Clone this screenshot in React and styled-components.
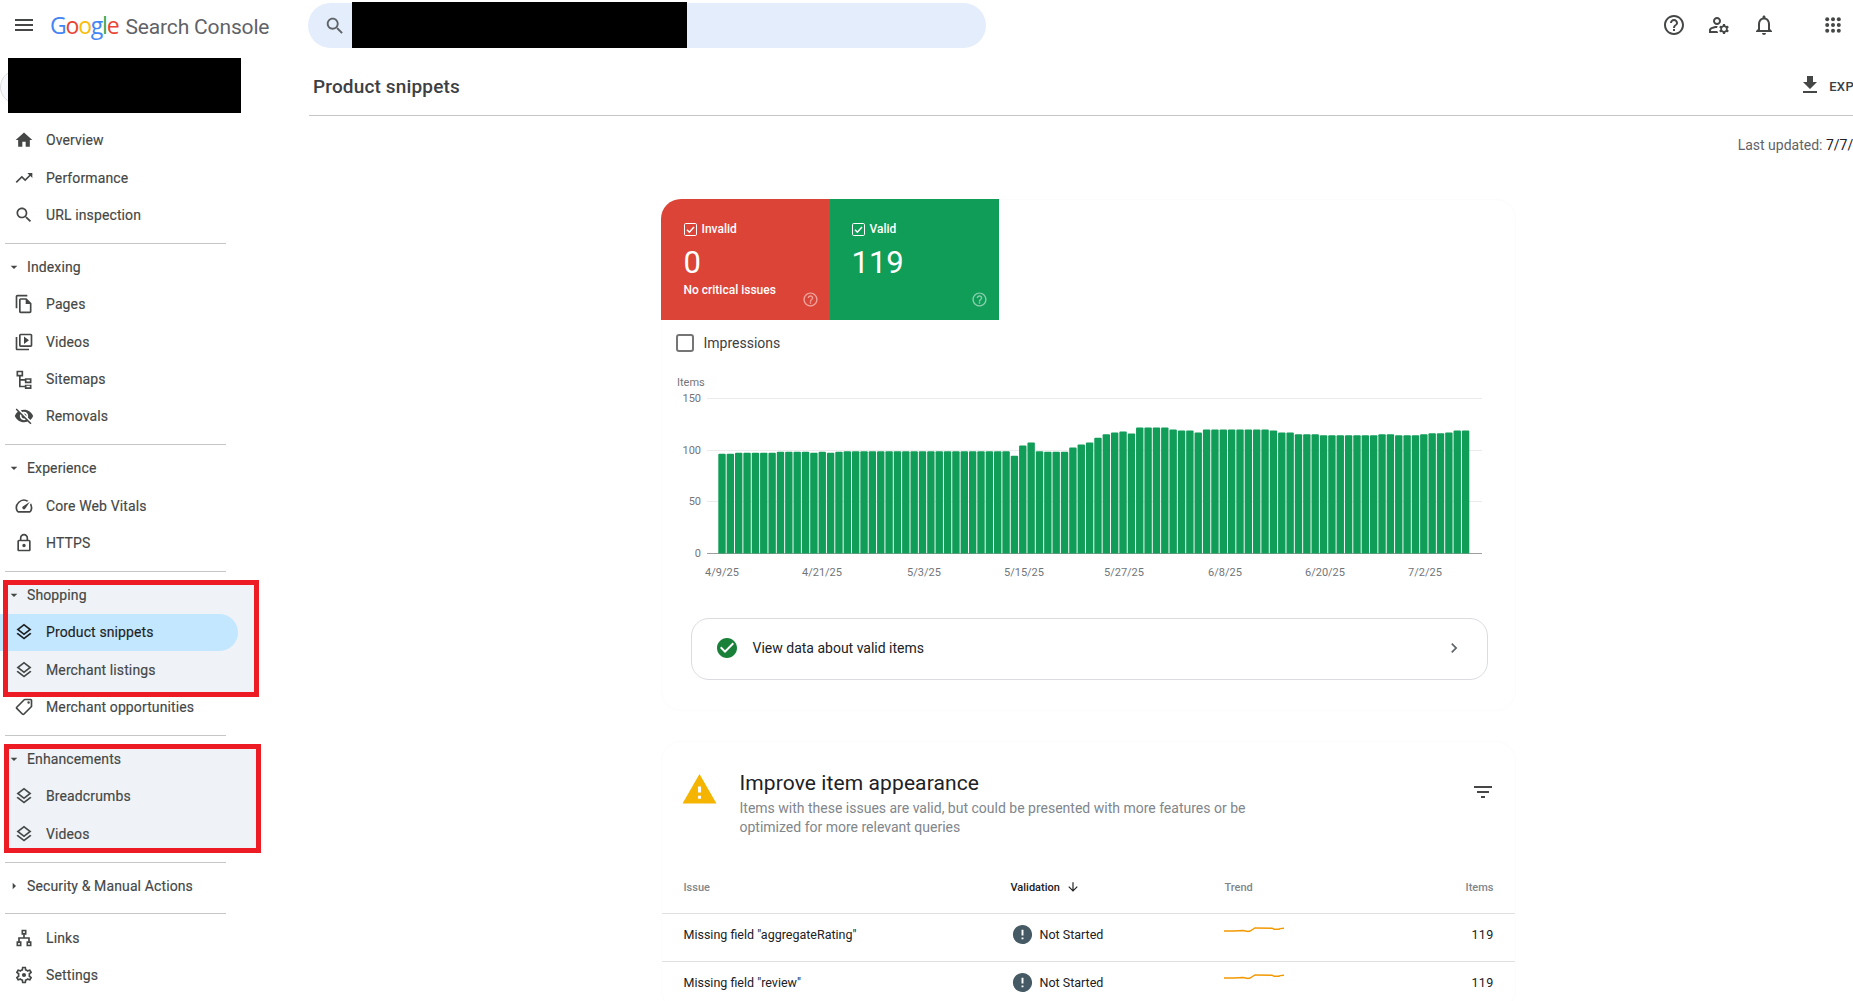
import React from "react";
import styled, { createGlobalStyle } from "styled-components";

const Global = createGlobalStyle`
  html, body { margin: 0; padding: 0; width: 1853px; height: 1001px; overflow: hidden; background: #fff; }
  body { font-family: Roboto, "Liberation Sans", sans-serif; color: #202124; }
  *, *::before, *::after { box-sizing: border-box; }
`;

const P = {
  menu: "M3 18h18v-2H3v2zm0-5h18v-2H3v2zm0-7v2h18V6H3z",
  home: "M10 20v-6h4v6h5v-8h3L12 3 2 12h3v8z",
  trend: "M16 6l2.29 2.29-4.88 4.88-4-4L2 16.59 3.41 18l6-6 4 4 6.3-6.29L22 12V6z",
  search: "M15.5 14h-.79l-.28-.27C15.41 12.59 16 11.11 16 9.5 16 5.91 13.09 3 9.5 3S3 5.91 3 9.5 5.91 16 9.5 16c1.61 0 3.09-.59 4.23-1.57l.27.28v.79l5 4.99L20.49 19l-4.99-5zm-6 0C7.01 14 5 11.99 5 9.5S7.01 5 9.5 5 14 7.01 14 9.5 11.99 14 9.5 14z",
  pages: "M16 1H4c-1.1 0-2 .9-2 2v14h2V3h12V1zm-1 4H8c-1.1 0-1.99.9-1.99 2L6 21c0 1.1.89 2 1.99 2H19c1.1 0 2-.9 2-2V11l-6-6zM8 21V7h6v5h5v9H8z",
  video: "M4 6H2v14c0 1.1.9 2 2 2h14v-2H4V6zm16-4H8c-1.1 0-2 .9-2 2v12c0 1.1.9 2 2 2h12c1.1 0 2-.9 2-2V4c0-1.1-.9-2-2-2zm0 14H8V4h12v12zM12 5.5v9l6-4.5z",
  sitemap: "M3 2h8v7H8v3h5v-1h8v6h-8v-3H8v6h5v-1h8v6h-8v-3H6V9H3V2zm2 2v3h4V4H5zm10 9v2h4v-2h-4zm0 7v2h4v-2h-4z",
  off: "M12 7c2.76 0 5 2.24 5 5 0 .65-.13 1.26-.36 1.83l2.92 2.92c1.51-1.26 2.7-2.89 3.43-4.75-1.73-4.39-6-7.5-11-7.5-1.4 0-2.74.25-3.98.7l2.16 2.16C10.74 7.13 11.35 7 12 7zM2 4.27l2.28 2.28.46.46C3.08 8.3 1.78 10.02 1 12c1.73 4.39 6 7.5 11 7.5 1.55 0 3.03-.3 4.38-.84l.42.42L19.73 22 21 20.73 3.27 3 2 4.27zM7.53 9.8l1.55 1.55c-.05.21-.08.43-.08.65 0 1.66 1.34 3 3 3 .22 0 .44-.03.65-.08l1.55 1.55c-.67.33-1.41.53-2.2.53-2.76 0-5-2.24-5-5 0-.79.2-1.53.53-2.2zm4.31-.78l3.15 3.15.02-.16c0-1.66-1.34-3-3-3l-.17.01z",
  speed: "M20.38 8.57l-1.23 1.85a8 8 0 0 1-.22 7.58H5.07A8 8 0 0 1 15.58 6.85l1.85-1.23A10 10 0 0 0 3.35 19a2 2 0 0 0 1.72 1h13.85a2 2 0 0 0 1.74-1 10 10 0 0 0-.27-10.44zm-9.79 6.84a2 2 0 0 0 2.83 0l5.66-8.49-8.49 5.66a2 2 0 0 0 0 2.83z",
  lock: "M18 8h-1V6c0-2.76-2.24-5-5-5S7 3.24 7 6v2H6c-1.1 0-2 .9-2 2v10c0 1.1.9 2 2 2h12c1.1 0 2-.9 2-2V10c0-1.1-.9-2-2-2zM9 6c0-1.66 1.34-3 3-3s3 1.34 3 3v2H9V6zm9 14H6V10h12v10zm-6-3c1.1 0 2-.9 2-2s-.9-2-2-2-2 .9-2 2 .9 2 2 2z",
  layers: "M11.99 18.54l-7.37-5.73L3 14.07l9 7 9-7-1.63-1.27-7.38 5.74zM12 16l7.36-5.73L21 9l-9-7-9 7 1.63 1.27L12 16zm0-11.47L17.74 9 12 13.47 6.26 9 12 4.53z",
  tag: "M21.41 11.58l-9-9C12.05 2.22 11.55 2 11 2H4c-1.1 0-2 .9-2 2v7c0 .55.22 1.05.59 1.42l9 9c.36.36.86.58 1.41.58s1.05-.22 1.41-.59l7-7c.37-.36.59-.86.59-1.41s-.23-1.06-.59-1.42zM13 20.01L4 11V4h7v-.01l9 9-7 7.02zM6.5 5a1.5 1.5 0 1 0 0 3 1.5 1.5 0 0 0 0-3z",
  links: "M9 2h6v6h-2v3h6v5h2v6h-6v-6h2v-3H7v3h2v6H3v-6h2v-5h6V8H9V2zm2 2v2h2V4h-2zM5 18v2h2v-2H5zm12 0v2h2v-2h-2z",
  gear: "M19.43 12.98c.04-.32.07-.64.07-.98 0-.34-.03-.66-.07-.98l2.11-1.65c.19-.15.24-.42.12-.64l-2-3.46c-.09-.16-.26-.25-.44-.25-.06 0-.12.01-.17.03l-2.49 1c-.52-.4-1.08-.73-1.69-.98l-.38-2.65C14.46 2.18 14.25 2 14 2h-4c-.25 0-.46.18-.49.42l-.38 2.65c-.61.25-1.17.59-1.69.98l-2.49-1c-.06-.02-.12-.03-.18-.03-.17 0-.34.09-.43.25l-2 3.46c-.13.22-.07.49.12.64l2.11 1.65c-.04.32-.07.65-.07.98 0 .33.03.66.07.98l-2.11 1.65c-.19.15-.24.42-.12.64l2 3.46c.09.16.26.25.44.25.06 0 .12-.01.17-.03l2.49-1c.52.4 1.08.73 1.69.98l.38 2.65c.03.24.24.42.49.42h4c.25 0 .46-.18.49-.42l.38-2.65c.61-.25 1.17-.59 1.69-.98l2.49 1c.06.02.12.03.18.03.17 0 .34-.09.43-.25l2-3.46c.12-.22.07-.49-.12-.64l-2.11-1.65zm-1.98-1.71c.04.31.05.52.05.73 0 .21-.02.43-.05.73l-.14 1.13.89.7 1.08.84-.7 1.21-1.27-.51-1.04-.42-.9.68c-.43.32-.84.56-1.25.73l-1.06.43-.16 1.13-.2 1.35h-1.4l-.19-1.35-.16-1.13-1.06-.43c-.43-.18-.83-.41-1.23-.71l-.91-.7-1.06.43-1.27.51-.7-1.21 1.08-.84.89-.7-.14-1.13c-.03-.31-.05-.54-.05-.74s.02-.43.05-.73l.14-1.13-.89-.7-1.08-.84.7-1.21 1.27.51 1.04.42.9-.68c.43-.32.84-.56 1.25-.73l1.06-.43.16-1.13.2-1.35h1.39l.19 1.35.16 1.13 1.06.43c.43.18.83.41 1.23.71l.91.7 1.06-.43 1.27-.51.7 1.21-1.07.85-.89.7.14 1.13zM12 9.5a2.5 2.5 0 1 0 0 5 2.5 2.5 0 0 0 0-5z",
  help: "M11 18h2v-2h-2v2zm1-16C6.48 2 2 6.48 2 12s4.48 10 10 10 10-4.48 10-10S17.52 2 12 2zm0 18c-4.41 0-8-3.59-8-8s3.59-8 8-8 8 3.59 8 8-3.59 8-8 8zm0-14c-2.21 0-4 1.79-4 4h2c0-1.1.9-2 2-2s2 .9 2 2c0 2-3 1.75-3 5h2c0-2.25 3-2.5 3-5 0-2.21-1.79-4-4-4z",
  manage: "M4 18v-.65c0-.34.16-.66.41-.81C6.1 15.53 8.03 15 10 15c.03 0 .05 0 .08.01.1-.7.3-1.37.59-1.98-.22-.02-.44-.03-.67-.03-2.42 0-4.68.67-6.61 1.82-.88.52-1.39 1.5-1.39 2.53V20h9.26c-.42-.6-.75-1.28-.97-2H4zM10 12c2.21 0 4-1.79 4-4s-1.79-4-4-4-4 1.79-4 4 1.79 4 4 4zm0-6c1.1 0 2 .9 2 2s-.9 2-2 2-2-.9-2-2 .9-2 2-2zM20.75 16c0-.22-.03-.42-.06-.63l1.14-1.01-1-1.73-1.45.49c-.32-.27-.68-.48-1.08-.63L18 11h-2l-.3 1.49c-.4.15-.76.36-1.08.63l-1.45-.49-1 1.73 1.14 1.01c-.03.21-.06.41-.06.63s.03.42.06.63l-1.14 1.01 1 1.73 1.45-.49c.32.27.68.48 1.08.63L16 21h2l.3-1.49c.4-.15.76-.36 1.08-.63l1.45.49 1-1.73-1.14-1.01c.03-.21.06-.41.06-.63zM17 18c-1.1 0-2-.9-2-2s.9-2 2-2 2 .9 2 2-.9 2-2 2z",
  bell: "M12 22c1.1 0 2-.9 2-2h-4c0 1.1.9 2 2 2zm6-6v-5c0-3.07-1.63-5.64-4.5-6.32V4c0-.83-.67-1.5-1.5-1.5s-1.5.67-1.5 1.5v.68C7.64 5.36 6 7.92 6 11v5l-2 2v1h16v-1l-2-2zm-2 1H8v-6c0-2.48 1.51-4.5 4-4.5s4 2.02 4 4.5v6z",
  download: "M19 9h-4V3H9v6H5l7 7 7-7zM5 18v2h14v-2H5z",
  warning: "M1 21h22L12 2 1 21zm12-3h-2v-2h2v2zm0-4h-2v-4h2v4z",
  filter: "M10 18h4v-2h-4v2zM3 6v2h18V6H3zm3 7h12v-2H6v2z",
  error: "M12 2C6.48 2 2 6.48 2 12s4.48 10 10 10 10-4.48 10-10S17.52 2 12 2zm1 15h-2v-2h2v2zm0-4h-2V7h2v6z",
  down: "M20 12l-1.41-1.41L13 16.17V4h-2v12.17l-5.58-5.59L4 12l8 8 8-8z",
  chevron: "M10 6L8.59 7.41 13.17 12l-4.58 4.59L10 18l6-6z",
  check: "M12 2C6.48 2 2 6.48 2 12s4.48 10 10 10 10-4.48 10-10S17.52 2 12 2zm-2 15l-5-5 1.41-1.41L10 14.17l7.59-7.59L19 8l-9 9z",
  caretDown: "M7 10l5 5 5-5z",
  caretRight: "M10 17l5-5-5-5v10z",
};

const Svg = styled.svg`
  display: block;
  flex: none;
  width: ${(p) => p.$size}px;
  height: ${(p) => p.$size}px;
  fill: ${(p) => p.$color || "#444746"};
  transform: ${(p) => (p.$rotate ? `rotate(${p.$rotate}deg)` : "none")};
`;
const Icon = ({ d, size = 20, color, rotate, ...rest }) => (
  <Svg viewBox="0 0 24 24" $size={size} $color={color} $rotate={rotate} {...rest}>
    <path d={d} />
  </Svg>
);

const Page = styled.div`
  width: 1853px;
  height: 1001px;
  overflow: hidden;
`;
const TopBar = styled.header`
  display: flex;
  align-items: center;
  height: 58px;
  padding: 0 8px 8px 12px;
`;
const LogoArea = styled.div`
  display: flex;
  align-items: center;
  width: 296px;
  flex: none;
`;
const Logo = styled.div`
  display: flex;
  align-items: baseline;
  margin-left: 14px;
  margin-top: 0;
  font-size: 22px;
  white-space: nowrap;
`;
const GoogleWord = styled.span`
  font-family: "Open Sans", Roboto, sans-serif;
  font-size: 23px;
  letter-spacing: -1.2px;
  margin-right: 7px;
`;
const Letter = styled.span`
  color: ${(p) => p.$c};
`;
const ProductName = styled.span`
  font-family: Roboto, sans-serif;
  color: #5f6368;
  font-size: 21px;
  letter-spacing: -0.15px;
`;
const SearchBar = styled.div`
  position: relative;
  width: 678px;
  height: 45px;
  margin-top: 1px;
  border-radius: 23px;
  background: #e4edfb;
  display: flex;
  align-items: center;
  padding-left: 16px;
`;
const TopRedaction = styled.div`
  position: absolute;
  left: 44px;
  top: -1px;
  width: 335px;
  height: 46px;
  background: #000;
`;
const TopActions = styled.div`
  display: flex;
  align-items: center;
  gap: 21px;
  margin-left: auto;
`;
const Apps = styled.svg`
  display: block;
  width: 16px;
  height: 16px;
  margin-left: 28px;
  margin-right: 4px;
  fill: #444746;
`;

const Body = styled.div`
  display: flex;
  align-items: flex-start;
`;
const Sidebar = styled.nav`
  flex: none;
  width: 309px;
`;
const PropertySlot = styled.div`
  position: relative;
  height: 55px;
  padding-left: 8px;
  margin-bottom: 8.5px;
  &::before {
    content: "";
    position: absolute;
    left: 0;
    top: 12px;
    width: 60px;
    height: 34px;
    border: 1px solid #dadce0;
    border-radius: 17px;
    background: #f6f8fc;
  }
`;
const PropertyRedaction = styled.div`
  position: relative;
  width: 233px;
  height: 55px;
  background: #000;
`;
const Divider = styled.div`
  width: 221px;
  height: 1px;
  margin: 9px 0 4.5px 5px;
  background: #c4c7c5;
`;
const Row = styled.div`
  position: relative;
  z-index: 1;
  display: flex;
  align-items: center;
  gap: 12px;
  width: 238px;
  height: 37.4px;
  padding-left: 14px;
  font-size: 14px;
  font-weight: 400;
  letter-spacing: 0.12px;
  -webkit-text-stroke: 0.15px currentColor;
  color: ${(p) => (p.$active ? "#1f1f1f" : "#444746")};
  background: ${(p) => (p.$active ? "#c2e7ff" : "transparent")};
  border-radius: 0 19px 19px 0;
`;
const SectionHead = styled(Row)`
  gap: 5px;
  padding-left: 6px;
`;
const Highlight = styled.div`
  position: relative;
  &::before,
  &::after {
    content: "";
    position: absolute;
    left: ${(p) => p.$left}px;
    top: ${(p) => p.$top}px;
    bottom: ${(p) => p.$bottom}px;
    width: ${(p) => p.$width}px;
  }
  &::before {
    background: #eff2f7;
  }
  &::after {
    z-index: 2;
    border: 5px solid #ed1c24;
    pointer-events: none;
  }
`;

const Main = styled.main`
  flex: none;
  width: 1558px;
`;
const TitleBar = styled.div`
  display: flex;
  align-items: center;
  justify-content: space-between;
  height: 58px;
  padding: 0 0 0 4px;
  border-bottom: 1px solid #c4c7c5;
`;
const Title = styled.h1`
  margin: 0;
  font-size: 19px;
  font-weight: 500;
  letter-spacing: 0.15px;
  color: #3c4043;
`;
const ExportButton = styled.div`
  display: flex;
  align-items: center;
  gap: 7px;
  margin: -4px -13px 0 0;
  font-size: 13px;
  font-weight: 500;
  color: #3c4043;
  letter-spacing: 0.4px;
`;
const ExportLabel = styled.span`
  margin-top: 4px;
`;
const LastUpdated = styled.div`
  padding-top: 19px;
  height: 39px;
  margin-right: -2px;
  line-height: 20px;
  text-align: right;
  font-size: 14px;
  color: #5f6368;
  white-space: nowrap;
  & b {
    font-weight: 400;
    color: #202124;
  }
`;
const Card = styled.section`
  width: 855px;
  margin: ${(p) => p.$top}px auto 0;
  border: 1px solid #fcfcfc;
  border-radius: 20px;
`;
const Tiles = styled.div`
  display: flex;
  height: 121px;
  margin: -1px 0 0 -1px;
`;
const Tile = styled.div`
  position: relative;
  width: 169px;
  padding: 21px 0 0 ${(p) => p.$pad}px;
  background: ${(p) => p.$bg};
  color: #fff;
  border-top-left-radius: ${(p) => (p.$first ? 20 : 0)}px;
`;
const TileLabel = styled.div`
  display: flex;
  align-items: center;
  gap: 5px;
  height: 18px;
  font-size: 12px;
  font-weight: 500;
`;
const TileValue = styled.div`
  margin-top: 7px;
  height: 36px;
  line-height: 36px;
  font-size: 31px;
`;
const TileNote = styled.div`
  margin-top: 1px;
  line-height: 16px;
  font-size: 12px;
  font-weight: 500;
`;
const TileHelp = styled.div`
  position: absolute;
  right: 11px;
  bottom: 12px;
  opacity: 0.5;
`;
const Tick = styled.svg`
  display: block;
  width: 13px;
  height: 13px;
  fill: none;
  stroke: #fff;
`;
const Toggle = styled.div`
  display: flex;
  align-items: center;
  gap: 10px;
  height: 18px;
  margin: 14px 0 0 14px;
  font-size: 14px;
  color: #3c4043;
`;
const EmptyBox = styled.div`
  width: 18px;
  height: 18px;
  border: 2px solid #757575;
  border-radius: 3px;
`;
const Chart = styled.svg`
  display: block;
  width: 855px;
  height: 215px;
  margin: 23px 0 0 -1px;
  font-family: Roboto, sans-serif;
  font-size: 11px;
`;
const DataLink = styled.div`
  display: flex;
  align-items: center;
  height: 62px;
  width: 797px;
  margin: 28px 0 30px 29px;
  padding: 0 23px 2px 23px;
  border: 1px solid #dadce0;
  border-radius: 18px;
  font-size: 14px;
  color: #202124;
`;
const DataLinkText = styled.span`
  margin-left: 14px;
  flex: 1;
`;
const IssueHeader = styled.div`
  display: flex;
  align-items: flex-start;
  padding: 27px 20px 0 19px;
`;
const WarningMark = styled.div`
  margin-top: 2px;
`;
const IssueText = styled.div`
  margin-left: 22px;
  width: 530px;
`;
const IssueTitle = styled.h2`
  margin: 0;
  font-size: 21px;
  font-weight: 400;
  line-height: 28px;
  color: #202124;
  letter-spacing: 0.1px;
`;
const IssueDesc = styled.p`
  margin: 2px 0 0;
  font-size: 14px;
  line-height: 19px;
  color: #80868b;
`;
const FilterButton = styled.div`
  margin-left: auto;
  margin-top: 11px;
`;
const TableRow = styled.div`
  display: grid;
  grid-template-columns: 327px 213px 1fr auto;
  align-items: center;
  height: ${(p) => p.$h}px;
  padding: ${(p) => p.$pt || 0}px 21px ${(p) => p.$pb || 0}px 22px;
  border-bottom: 1px solid #e0e0e0;
  font-size: 12.5px;
  font-weight: 400;
  color: #202124;
`;
const HeadCell = styled.div`
  display: flex;
  align-items: center;
  gap: 6px;
  font-size: 11px;
  font-weight: 500;
  color: ${(p) => (p.$strong ? "#202124" : "#80868b")};
`;
const TrendHead = styled(HeadCell)`
  margin-left: 1px;
`;
const StatusCell = styled.div`
  display: flex;
  align-items: center;
  gap: 6px;
`;
const Count = styled.div`
  letter-spacing: 0.3px;
`;
const Spark = styled.svg`
  display: block;
  width: 60px;
  height: 8px;
  margin-top: -10px;
  fill: none;
  stroke: #f29900;
  stroke-width: 1.4;
`;

const tops = [251,251,248,248,248,248,248,245,245,245,245,248,245,248,245,243,243,243,243,243,243,243,243,243,243,243,243,243,243,243,243,243,243,243,243,257,226,217,243,245,245,245,232,223,217,203,192,187,184,190,172,172,172,172,178,181,181,187,178,178,178,178,178,178,178,178,181,187,187,192,192,192,195,195,195,195,195,195,195,192,192,195,195,195,192,189,189,187,181,181];
const xTicks = [["4/9/25",722],["4/21/25",822],["5/3/25",924],["5/15/25",1024],["5/27/25",1124],["6/8/25",1225],["6/20/25",1325],["7/2/25",1425]];
const yTicks = [[150,398],[100,450],[50,501],[0,553]];

const OX = 661, OY = 375;

const TileTick = () => (
  <Tick viewBox="0 0 13 13">
    <rect x="0.5" y="0.5" width="12" height="12" rx="1.2" />
    <path d="M3 6.8l2.4 2.4L10 4" strokeWidth="1.5" />
  </Tick>
);

const NavRow = ({ icon, label, active, rotate }) => (
  <Row $active={active}>
    <Icon d={icon} size={20} rotate={rotate} color={active ? "#1f1f1f" : "#444746"} />
    {label}
  </Row>
);
const Head = ({ label, open = true }) => (
  <SectionHead>
    <Icon d={open ? P.caretDown : P.caretRight} size={16} />
    {label}
  </SectionHead>
);

const Issue = ({ label }) => (
  <TableRow $h={47.5} $pb={5}>
    <div>{label}</div>
    <StatusCell>
      <Icon d={P.error} size={23} color="#455a64" />
      Not Started
    </StatusCell>
    <Spark viewBox="0 0 60 8">
      <polyline points="0,5 10,5 19,4.5 24,5.5 26,5 31,2 48,2.2 50,3.2 55,3.2 56,2.6 60,2.2" />
    </Spark>
    <Count>119</Count>
  </TableRow>
);

export default function App() {
  return (
    <Page>
      <Global />
      <TopBar>
        <LogoArea>
          <Icon d={P.menu} size={24} color="#444746" />
          <Logo>
            <GoogleWord>
              <Letter $c="#4285f4">G</Letter>
              <Letter $c="#ea4335">o</Letter>
              <Letter $c="#fbbc05">o</Letter>
              <Letter $c="#4285f4">g</Letter>
              <Letter $c="#34a853">l</Letter>
              <Letter $c="#ea4335">e</Letter>
            </GoogleWord>
            <ProductName>Search Console</ProductName>
          </Logo>
        </LogoArea>
        <SearchBar>
          <Icon d={P.search} size={22} color="#5f6368" />
          <TopRedaction />
        </SearchBar>
        <TopActions>
          <Icon d={P.help} size={24} />
          <Icon d={P.manage} size={24} />
          <Icon d={P.bell} size={24} />
          <Apps viewBox="0 0 16 16">
            {[2.2, 8, 13.8].flatMap((y) =>
              [2.2, 8, 13.8].map((x) => <circle key={`${x}-${y}`} cx={x} cy={y} r="2" />)
            )}
          </Apps>
        </TopActions>
      </TopBar>
      <Body>
        <Sidebar>
          <PropertySlot>
            <PropertyRedaction />
          </PropertySlot>
          <NavRow icon={P.home} label="Overview" />
          <NavRow icon={P.trend} label="Performance" />
          <NavRow icon={P.search} label="URL inspection" />
          <Divider />
          <Head label="Indexing" />
          <NavRow icon={P.pages} label="Pages" />
          <NavRow icon={P.video} label="Videos" />
          <NavRow icon={P.sitemap} label="Sitemaps" />
          <NavRow icon={P.off} label="Removals" />
          <Divider />
          <Head label="Experience" />
          <NavRow icon={P.speed} label="Core Web Vitals" />
          <NavRow icon={P.lock} label="HTTPS" />
          <Divider />
          <Highlight $left={3} $width={256} $top={4} $bottom={-9}>
            <Head label="Shopping" />
            <NavRow icon={P.layers} label="Product snippets" active />
            <NavRow icon={P.layers} label="Merchant listings" />
          </Highlight>
          <NavRow icon={P.tag} label="Merchant opportunities" rotate={90} />
          <Divider />
          <Highlight $left={4} $width={257} $top={4} $bottom={0}>
            <Head label="Enhancements" />
            <NavRow icon={P.layers} label="Breadcrumbs" />
            <NavRow icon={P.layers} label="Videos" />
          </Highlight>
          <Divider />
          <Head label="Security & Manual Actions" open={false} />
          <Divider />
          <NavRow icon={P.links} label="Links" />
          <NavRow icon={P.gear} label="Settings" />
        </Sidebar>
        <Main>
          <TitleBar>
            <Title>Product snippets</Title>
            <ExportButton>
              <Icon d={P.download} size={24} />
              <ExportLabel>EXPORT</ExportLabel>
            </ExportButton>
          </TitleBar>
          <LastUpdated>
            Last updated: <b>7/7/25</b>
          </LastUpdated>
          <Card $top={44}>
            <Tiles>
              <Tile $bg="#db4437" $pad={23} $first>
                <TileLabel>
                  <TileTick />
                  Invalid
                </TileLabel>
                <TileValue>0</TileValue>
                <TileNote>No critical issues</TileNote>
                <TileHelp>
                  <Icon d={P.help} size={17} color="#fff" />
                </TileHelp>
              </Tile>
              <Tile $bg="#0f9d58" $pad={22}>
                <TileLabel>
                  <TileTick />
                  Valid
                </TileLabel>
                <TileValue>119</TileValue>
                <TileHelp>
                  <Icon d={P.help} size={17} color="#fff" />
                </TileHelp>
              </Tile>
            </Tiles>
            <Toggle>
              <EmptyBox />
              Impressions
            </Toggle>
            <Chart viewBox="0 0 855 215">
              <text x={677 - OX} y={386 - OY} fill="#757575">Items</text>
              {yTicks.map(([v, y]) => (
                <g key={v}>
                  <line x1={707 - OX} x2={1482 - OX} y1={y - OY + 0.5} y2={y - OY + 0.5} stroke={v === 0 ? "#9e9e9e" : "#ebebeb"} />
                  <text x={701 - OX} y={y - OY + 4} textAnchor="end" fill="#757575">{v}</text>
                </g>
              ))}
              {tops.map((t, i) => {
                const h = (550 - t) / 3;
                return (
                  <path
                    key={i}
                    d={`M${718.3 - OX + i * 8.355} ${553.5 - OY}v${-h + 1}q0 -1 1 -1h5.4q1 0 1 1v${h - 1}z`}
                    fill="#0f9d58"
                  />
                );
              })}
              {xTicks.map(([l, x]) => (
                <text key={l} x={x - OX} y={576 - OY} textAnchor="middle" fill="#70757a">{l}</text>
              ))}
            </Chart>
            <DataLink>
              <Icon d={P.check} size={24} color="#188038" />
              <DataLinkText>View data about valid items</DataLinkText>
              <Icon d={P.chevron} size={20} color="#5f6368" />
            </DataLink>
          </Card>
          <Card $top={30}>
            <IssueHeader>
              <WarningMark>
                <Icon d={P.warning} size={37} color="#f4b400" />
              </WarningMark>
              <IssueText>
                <IssueTitle>Improve item appearance</IssueTitle>
                <IssueDesc>
                  Items with these issues are valid, but could be presented with more features or be optimized for more relevant queries
                </IssueDesc>
              </IssueText>
              <FilterButton>
                <Icon d={P.filter} size={24} color="#444746" />
              </FilterButton>
            </IssueHeader>
            <TableRow $h={77} $pt={24}>
              <HeadCell>Issue</HeadCell>
              <HeadCell $strong>
                Validation
                <Icon d={P.down} size={14} color="#202124" />
              </HeadCell>
              <TrendHead>Trend</TrendHead>
              <HeadCell>Items</HeadCell>
            </TableRow>
            <Issue label={'Missing field "aggregateRating"'} />
            <Issue label={'Missing field "review"'} />
          </Card>
        </Main>
      </Body>
    </Page>
  );
}
